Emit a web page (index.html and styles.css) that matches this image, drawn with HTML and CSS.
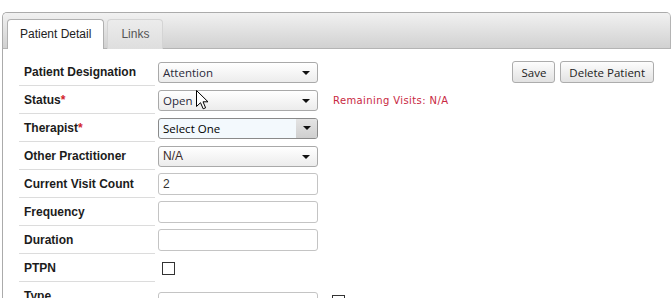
FILE: index.html
```html
<!DOCTYPE html>
<html lang="en">
<head>
    <meta charset="UTF-8">
    <title>Patient Detail</title>
    <link rel="stylesheet" href="styles.css">
</head>
<body>
    <div class="panel">
        <div class="tab-bar">
            <div class="tab active">Patient Detail</div>
            <div class="tab">Links</div>
        </div>

        <div class="tab-content">
            <div class="row">
                <div class="label">Patient Designation</div>
                <div class="field"><div class="select">Attention<span class="arrow"></span></div></div>
                <div class="extra actions">
                    <button class="btn">Save</button>
                    <button class="btn">Delete Patient</button>
                </div>
            </div>
            <div class="row">
                <div class="label">Status<span class="req">*</span></div>
                <div class="field"><div class="select">Open<span class="arrow"></span></div></div>
                <div class="extra"><span class="remaining">Remaining Visits: N/A</span></div>
            </div>
            <div class="row">
                <div class="label">Therapist<span class="req">*</span></div>
                <div class="field"><div class="select focused">Select One<span class="arrow-box"><span class="arrow"></span></span></div></div>
            </div>
            <div class="row">
                <div class="label">Other Practitioner</div>
                <div class="field"><div class="select plain">N/A<span class="arrow"></span></div></div>
            </div>
            <div class="row">
                <div class="label">Current Visit Count</div>
                <div class="field"><div class="input">2</div></div>
            </div>
            <div class="row">
                <div class="label">Frequency</div>
                <div class="field"><div class="input"></div></div>
            </div>
            <div class="row">
                <div class="label">Duration</div>
                <div class="field"><div class="input"></div></div>
            </div>
            <div class="row">
                <div class="label">PTPN</div>
                <div class="field"><span class="checkbox"></span></div>
            </div>
            <div class="row last">
                <div class="label">Type</div>
                <div class="field"><div class="input"></div></div>
                <div class="extra"><span class="checkbox"></span></div>
            </div>
        </div>
    </div>

    <svg class="cursor" width="13" height="20" viewBox="0 0 13 20">
        <path d="M0.5 0.5 L0.5 16.5 L4.5 12.7 L7.2 18.8 L9.6 17.8 L7 11.8 L12 11.8 Z" fill="#fff" stroke="#000" stroke-width="1"/>
    </svg>
</body>
</html>
```

FILE: styles.css
```css
* {
    box-sizing: border-box;
    margin: 0;
    padding: 0;
}

body {
    background: #fff;
    font-family: "Liberation Sans", Arial, sans-serif;
    font-size: 12px;
    color: #222;
    overflow: hidden;
}

.panel {
    margin: 12px 0 0 2px;
    width: 669px;
    height: 286px;
    overflow: hidden;
    border: 1px solid #ababab;
    border-right: none;
    border-bottom: none;
    border-radius: 5px 5px 0 0;
}

.tab-bar {
    display: flex;
    gap: 3px;
    height: 36px;
    padding: 6px 0 0 4px;
    background: linear-gradient(#f1f1f1, #d1d1d1);
    border-bottom: 1px solid #b4b4b4;
    border-radius: 4px 4px 0 0;
    border-right: 1px solid #b4b4b4;
}

.tab {
    height: 30px;
    padding: 0 13px;
    line-height: 28px;
    color: #555;
    background: linear-gradient(#ececec, #dedede);
    border: 1px solid #d4d4d4;
    border-bottom: none;
    border-radius: 4px 4px 0 0;
}

.tab.active {
    padding: 0 12px;
    color: #222;
    background: #fff;
    border-color: #b0b0b0;
}

.tab-content {
    padding: 9px 0 0 16px;
}

.row {
    display: flex;
    align-items: center;
    height: 28px;
}

.label {
    width: 136px;
    height: 28px;
    padding: 2px 0 0 5px;
    line-height: 25px;
    font-weight: bold;
    color: #1c1c1c;
    border-bottom: 1px solid #dcdcdc;
}

.req {
    color: #d2232a;
}

.field {
    width: 160px;
    margin-left: 3px;
}

.extra {
    flex: 1;
    margin-left: 15px;
}

.select {
    position: relative;
    height: 21px;
    padding-left: 4px;
    line-height: 19px;
    font-family: "Open Sans", "DejaVu Sans", sans-serif;
    font-size: 11.5px;
    color: #2a2a3a;
    background: linear-gradient(#ffffff, #ececec);
    border: 1px solid #a9a9a9;
    border-radius: 3px;
}

.select.plain {
    font-family: "Liberation Sans", Arial, sans-serif;
    font-size: 12px;
    color: #3a2a2a;
}

.select.focused {
    color: #000;
    background: #f3f9fd;
    border-color: #8a8a8a;
}

.arrow {
    position: absolute;
    right: 7px;
    top: 8px;
    border-left: 4px solid transparent;
    border-right: 4px solid transparent;
    border-top: 4px solid #111;
}

.arrow-box {
    position: absolute;
    top: 0;
    right: 0;
    width: 21px;
    height: 19px;
    background: linear-gradient(#e4e4e4, #cfcfcf);
    border-radius: 0 2px 2px 0;
}

.arrow-box .arrow {
    right: 6px;
    top: 7px;
}

.input {
    height: 22px;
    padding-left: 4px;
    line-height: 20px;
    color: #333;
    background: #fff;
    border: 1px solid #c4c4c4;
    border-radius: 3px;
}

.checkbox {
    display: block;
    width: 13px;
    height: 13px;
    margin-left: 4px;
    border: 1px solid #333;
    background: #fff;
}

.row.last .label {
    border-bottom: none;
}

.row.last .field {
    margin-top: 13px;
}

.row.last .checkbox {
    margin-left: -1px;
    margin-top: 10px;
}

.remaining {
    font-family: "DejaVu Sans", Verdana, sans-serif;
    font-size: 10px;
    letter-spacing: 0.4px;
    color: #c8283f;
}

.actions {
    display: flex;
    justify-content: flex-end;
    gap: 5px;
    padding-right: 17px;
}

.btn {
    height: 22px;
    padding: 0 8px;
    font-family: "Open Sans", "DejaVu Sans", sans-serif;
    font-size: 11.5px;
    color: #222;
    background: linear-gradient(#fdfdfd, #e2e2e2);
    border: 1px solid #acacac;
    border-radius: 3px;
}

.cursor {
    position: absolute;
    left: 196px;
    top: 90px;
}
```
